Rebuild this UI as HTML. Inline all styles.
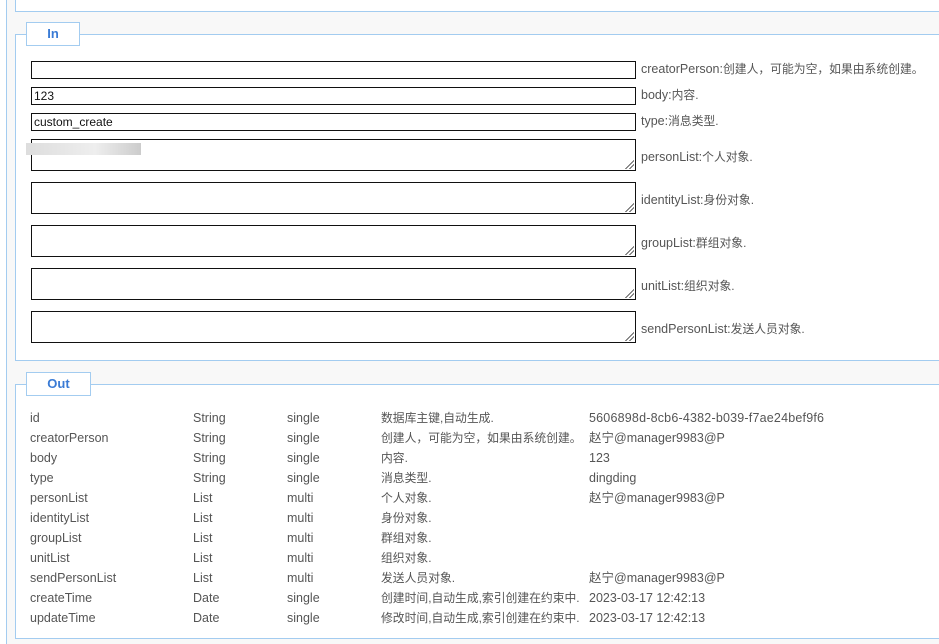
<!DOCTYPE html>
<html><head><meta charset="utf-8"><style>
body{margin:0;width:939px;height:644px;background:#fff;position:relative;overflow:hidden;font-family:"Liberation Sans","Noto Sans CJK SC",sans-serif;font-size:12.5px;color:#555}
.abs{position:absolute}
.outer{left:6px;top:0;width:933px;height:644px;border-left:1px solid #a3ccf0;background:#f8f8f8}
.fs{position:absolute;left:15px;width:940px;background:#fff;border:1px solid #a3ccf0}
.leg{position:absolute;background:#fff;border:1px solid #a3ccf0;color:#3a7bd5;font-weight:bold;font-size:13px;text-align:center;line-height:22px;height:22px}
.in{position:absolute;left:31px;width:601px;border:1px solid #111;background:#fff;font-size:12px;color:#111;padding-left:2px;box-sizing:content-box}
.lab{position:absolute;left:641px;white-space:nowrap;font-size:12.5px}
.lab i,.row i{font-style:normal;font-size:11.8px}
.rs{position:absolute;right:1px;bottom:1px;width:9px;height:9px;background:linear-gradient(135deg,transparent 48%,#666 48%,#666 56%,transparent 56%,transparent 70%,#666 70%,#666 78%,transparent 78%)}
.row{position:absolute;left:0;height:20px;line-height:20px;white-space:nowrap}
.row span{position:absolute}
</style></head><body>
<div class="abs outer"></div>
<div class="fs" style="top:-5px;height:15px"></div>
<div class="fs" style="top:34px;height:325px"></div>
<div class="leg" style="left:26px;top:22px;width:52px">In</div>
<div class="in" style="top:61px;height:16px"></div>
<div class="lab" style="top:60px">creatorPerson:<i>创建人，可能为空，如果由系统创建。</i></div>
<div class="in" style="top:87px;height:16px;line-height:16px">123</div>
<div class="lab" style="top:86px">body:<i>内容.</i></div>
<div class="in" style="top:113px;height:16px;line-height:16px">custom_create</div>
<div class="lab" style="top:112px">type:<i>消息类型.</i></div>
<div class="in" style="top:139px;height:30px"><div class="abs" style="left:-6px;top:3px;width:115px;height:12px;background:linear-gradient(90deg,#ddd,#eee 60%,#ccc)"></div><div class="rs"></div></div>
<div class="lab" style="top:148px">personList:<i>个人对象.</i></div>
<div class="in" style="top:182px;height:30px"><div class="rs"></div></div>
<div class="lab" style="top:191px">identityList:<i>身份对象.</i></div>
<div class="in" style="top:225px;height:30px"><div class="rs"></div></div>
<div class="lab" style="top:234px">groupList:<i>群组对象.</i></div>
<div class="in" style="top:268px;height:30px"><div class="rs"></div></div>
<div class="lab" style="top:277px">unitList:<i>组织对象.</i></div>
<div class="in" style="top:311px;height:30px"><div class="rs"></div></div>
<div class="lab" style="top:320px">sendPersonList:<i>发送人员对象.</i></div>

<div class="fs" style="top:384px;height:253px"></div>
<div class="leg" style="left:26px;top:372px;width:63px">Out</div>
<div class="row" style="top:408px"><span style="left:30px">id</span><span style="left:193px">String</span><span style="left:287px">single</span><span style="left:381px"><i>数据库主键,自动生成.</i></span><span style="left:589px;letter-spacing:0.2px">5606898d-8cb6-4382-b039-f7ae24bef9f6</span></div>
<div class="row" style="top:428px"><span style="left:30px">creatorPerson</span><span style="left:193px">String</span><span style="left:287px">single</span><span style="left:381px"><i>创建人，可能为空，如果由系统创建。</i></span><span style="left:589px">赵宁@manager9983@P</span></div>
<div class="row" style="top:448px"><span style="left:30px">body</span><span style="left:193px">String</span><span style="left:287px">single</span><span style="left:381px"><i>内容.</i></span><span style="left:589px">123</span></div>
<div class="row" style="top:468px"><span style="left:30px">type</span><span style="left:193px">String</span><span style="left:287px">single</span><span style="left:381px"><i>消息类型.</i></span><span style="left:589px">dingding</span></div>
<div class="row" style="top:488px"><span style="left:30px">personList</span><span style="left:193px">List</span><span style="left:287px">multi</span><span style="left:381px"><i>个人对象.</i></span><span style="left:589px">赵宁@manager9983@P</span></div>
<div class="row" style="top:508px"><span style="left:30px">identityList</span><span style="left:193px">List</span><span style="left:287px">multi</span><span style="left:381px"><i>身份对象.</i></span></div>
<div class="row" style="top:528px"><span style="left:30px">groupList</span><span style="left:193px">List</span><span style="left:287px">multi</span><span style="left:381px"><i>群组对象.</i></span></div>
<div class="row" style="top:548px"><span style="left:30px">unitList</span><span style="left:193px">List</span><span style="left:287px">multi</span><span style="left:381px"><i>组织对象.</i></span></div>
<div class="row" style="top:568px"><span style="left:30px">sendPersonList</span><span style="left:193px">List</span><span style="left:287px">multi</span><span style="left:381px"><i>发送人员对象.</i></span><span style="left:589px">赵宁@manager9983@P</span></div>
<div class="row" style="top:588px"><span style="left:30px">createTime</span><span style="left:193px">Date</span><span style="left:287px">single</span><span style="left:381px"><i>创建时间,自动生成,索引创建在约束中.</i></span><span style="left:589px">2023-03-17 12:42:13</span></div>
<div class="row" style="top:608px"><span style="left:30px">updateTime</span><span style="left:193px">Date</span><span style="left:287px">single</span><span style="left:381px"><i>修改时间,自动生成,索引创建在约束中.</i></span><span style="left:589px">2023-03-17 12:42:13</span></div>
</body></html>
